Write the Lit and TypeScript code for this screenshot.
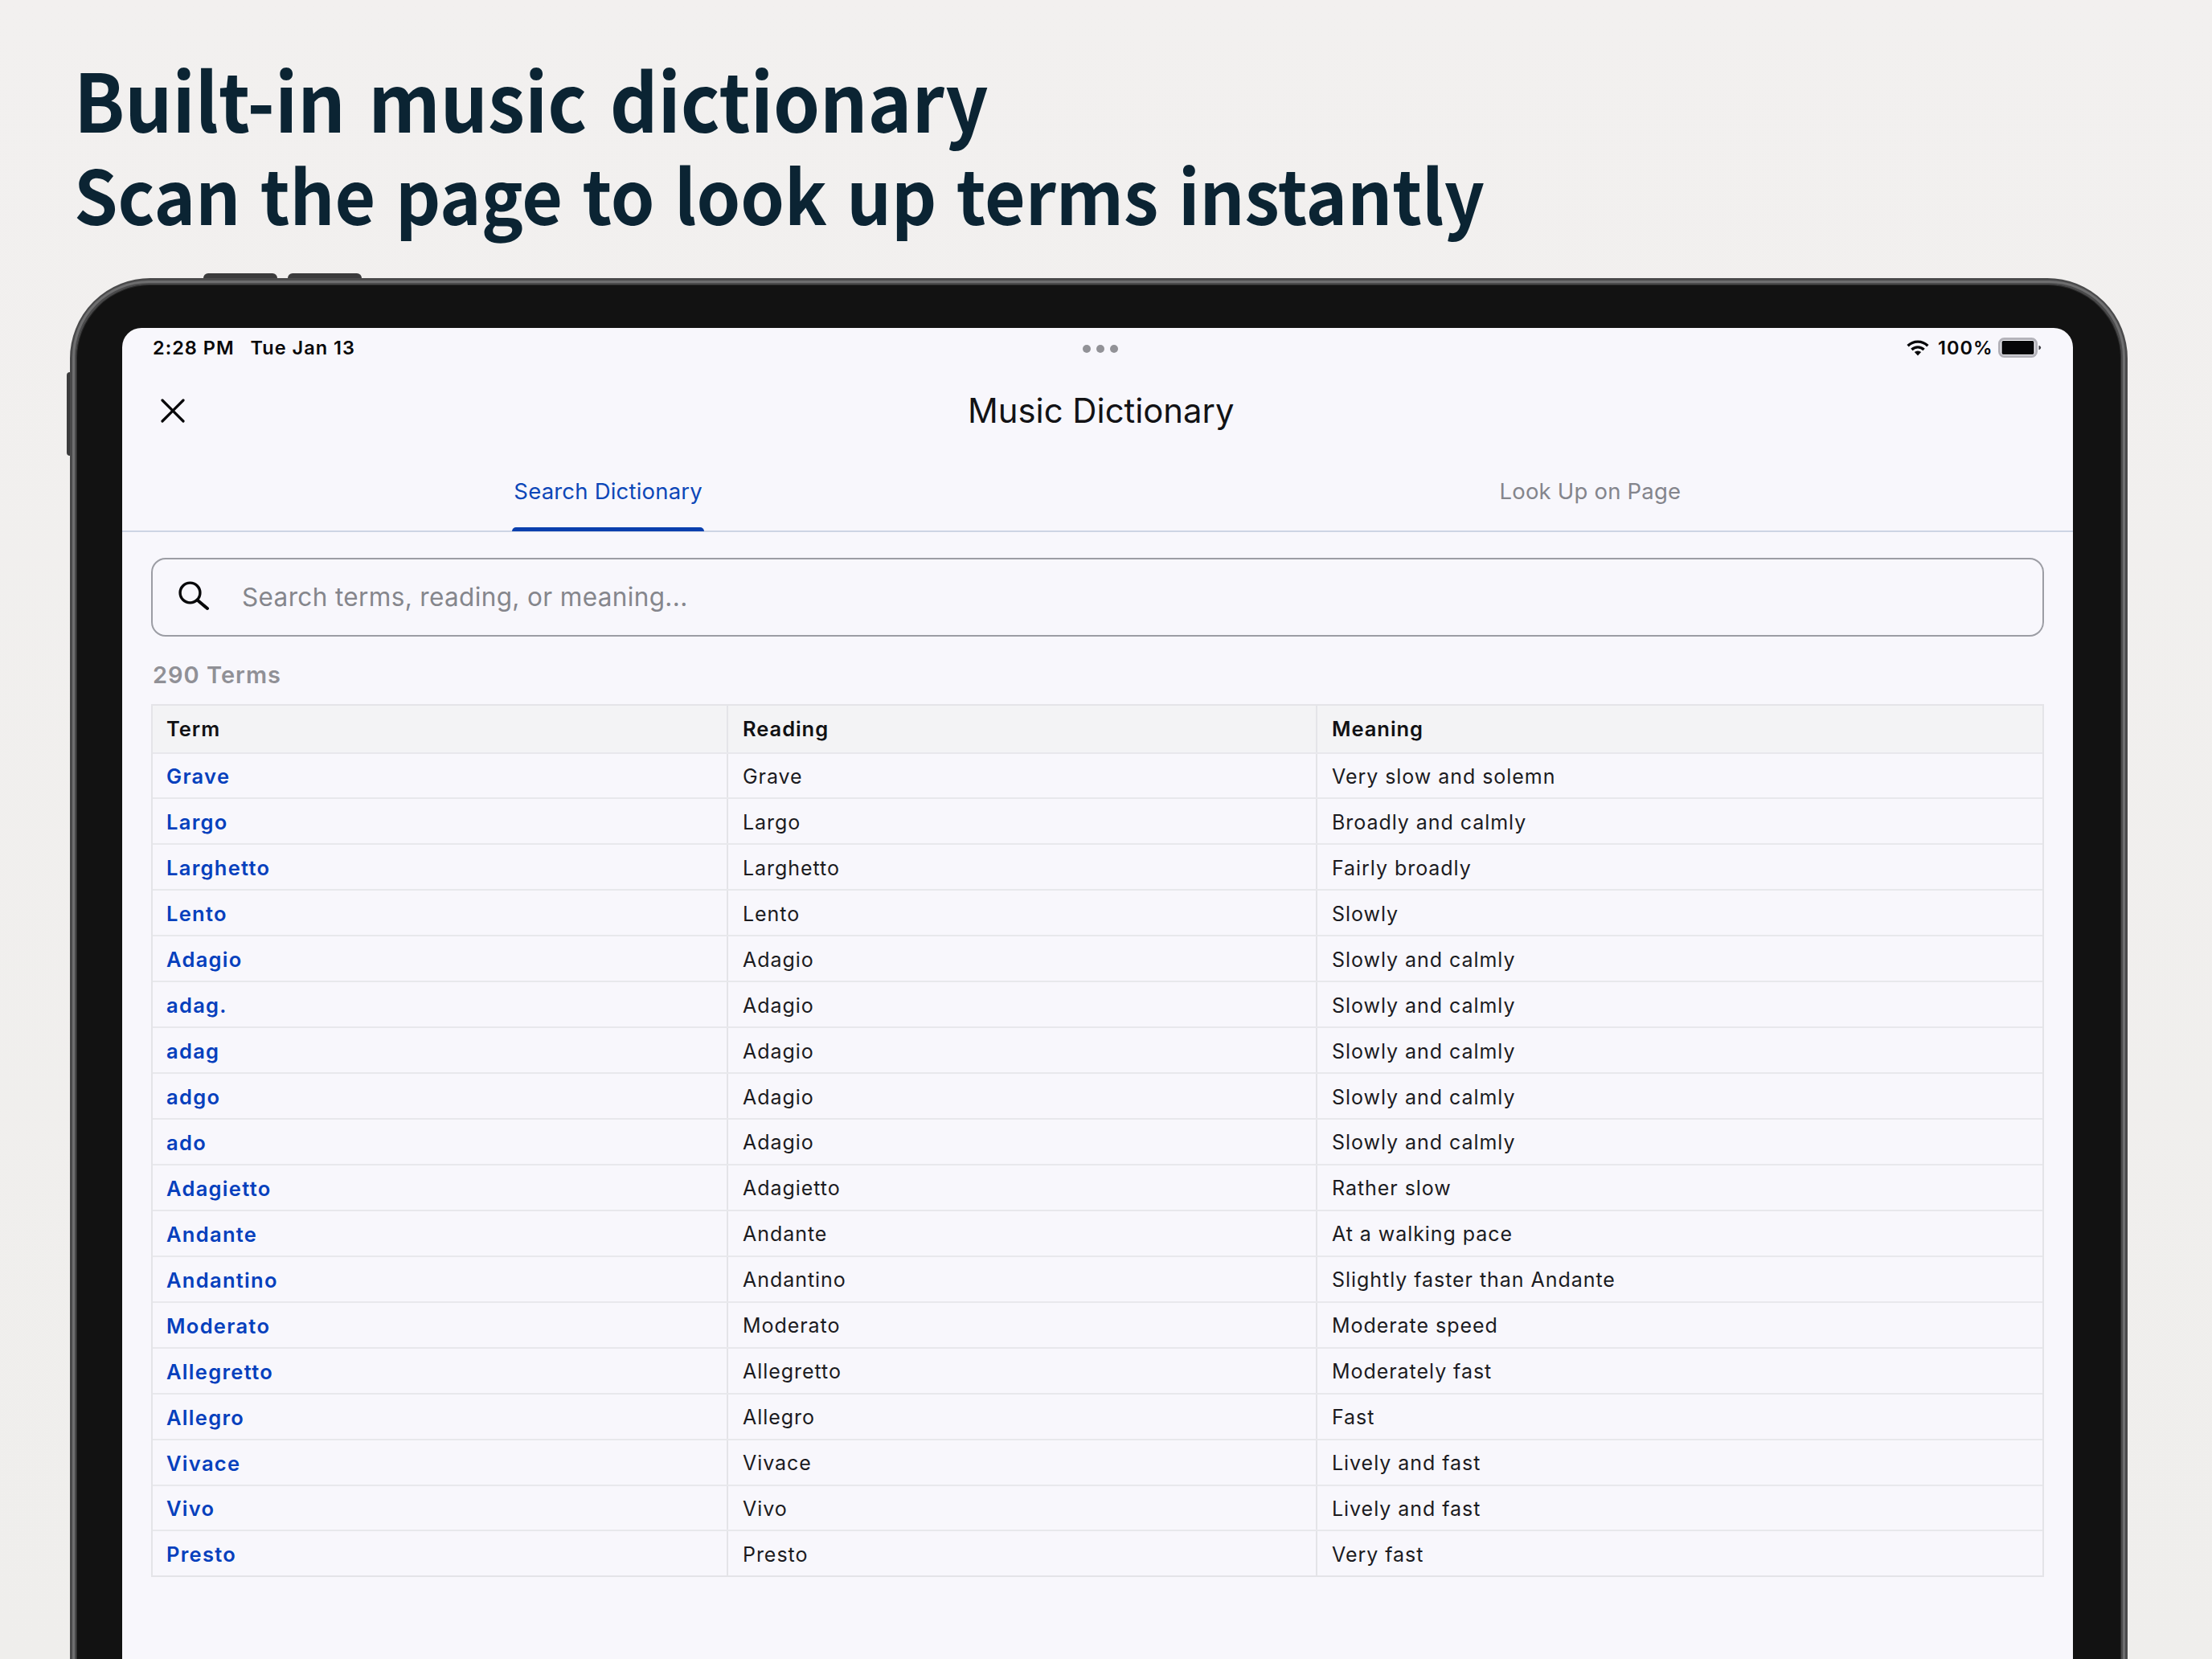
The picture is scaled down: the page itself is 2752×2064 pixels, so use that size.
import { LitElement, html, css } from "lit";
import { customElement, property, state } from "lit/decorators.js";
import { classMap } from "lit/directives/class-map.js";
import { repeat } from "lit/directives/repeat.js";

interface Entry {
  term: string;
  reading: string;
  meaning: string;
}

const ENTRIES: Entry[] = [
  { term: "Grave", reading: "Grave", meaning: "Very slow and solemn" },
  { term: "Largo", reading: "Largo", meaning: "Broadly and calmly" },
  { term: "Larghetto", reading: "Larghetto", meaning: "Fairly broadly" },
  { term: "Lento", reading: "Lento", meaning: "Slowly" },
  { term: "Adagio", reading: "Adagio", meaning: "Slowly and calmly" },
  { term: "adag.", reading: "Adagio", meaning: "Slowly and calmly" },
  { term: "adag", reading: "Adagio", meaning: "Slowly and calmly" },
  { term: "adgo", reading: "Adagio", meaning: "Slowly and calmly" },
  { term: "ado", reading: "Adagio", meaning: "Slowly and calmly" },
  { term: "Adagietto", reading: "Adagietto", meaning: "Rather slow" },
  { term: "Andante", reading: "Andante", meaning: "At a walking pace" },
  { term: "Andantino", reading: "Andantino", meaning: "Slightly faster than Andante" },
  { term: "Moderato", reading: "Moderato", meaning: "Moderate speed" },
  { term: "Allegretto", reading: "Allegretto", meaning: "Moderately fast" },
  { term: "Allegro", reading: "Allegro", meaning: "Fast" },
  { term: "Vivace", reading: "Vivace", meaning: "Lively and fast" },
  { term: "Vivo", reading: "Vivo", meaning: "Lively and fast" },
  { term: "Presto", reading: "Presto", meaning: "Very fast" },
];

@customElement("status-bar")
class StatusBar extends LitElement {
  static styles = css`
    :host {
      display: grid;
      grid-template-columns: 1fr auto 1fr;
      align-items: center;
      height: 50px;
      padding: 0 39px 0 38px;
      font-size: 23.5px;
      font-weight: 600;
      letter-spacing: 1px;
      color: #08080a;
    }
    .left {
      display: flex;
      gap: 20px;
      padding-bottom: 1px;
    }
    .dots {
      display: flex;
      gap: 7px;
      padding: 2px 0 0 8px;
    }
    .dot {
      width: 10px;
      height: 10px;
      border-radius: 50%;
      background: #929297;
    }
    .right {
      display: flex;
      justify-content: flex-end;
      align-items: center;
      padding-bottom: 1px;
    }
    .wifi {
      width: 28px;
      height: 21px;
      margin-right: 11px;
    }
    .battery {
      width: 54px;
      height: 25px;
      margin-left: 6px;
    }
  `;

  render() {
    return html`
      <div class="left"><span>2:28 PM</span><span>Tue Jan 13</span></div>
      <div class="dots">
        <span class="dot"></span><span class="dot"></span><span class="dot"></span>
      </div>
      <div class="right">
        <svg class="wifi" viewBox="0 0 28 21">
          <g fill="none" stroke="#08080a" stroke-width="3.4">
            <path d="M1.6 8.2a17.6 17.6 0 0 1 24.8 0" />
            <path d="M6.4 13a10.8 10.8 0 0 1 15.2 0" />
          </g>
          <path d="M14 20.5l-4.2-4.4a6 6 0 0 1 8.4 0z" fill="#08080a" />
        </svg>
        <span>100%</span>
        <svg class="battery" viewBox="0 0 54 25">
          <rect x="1.5" y="1.5" width="46" height="22" rx="6" fill="none" stroke="#b3b2b9" stroke-width="3" />
          <rect x="4.5" y="4" width="40" height="17" rx="2" fill="#060608" />
          <path d="M50.5 10c3.6.6 3.6 4.6 0 5.2z" fill="#3c3c42" />
        </svg>
      </div>
    `;
  }
}

@customElement("term-table")
class TermTable extends LitElement {
  @property({ attribute: false }) entries: Entry[] = [];

  static styles = css`
    :host {
      display: block;
      border: 2px solid #e4e4e8;
      font-size: 25px;
      letter-spacing: 0.95px;
      color: #1b1b1f;
    }
    .row {
      display: grid;
      grid-template-columns: 714px 733px 1fr;
      height: 56.94px;
      box-sizing: border-box;
      border-top: 2px solid #e8e8ec;
    }
    .head {
      height: 57.5px;
      border-top: none;
      background: #f3f3f5;
      font-size: 25.5px;
      font-weight: 600;
      color: #111114;
    }
    .cell {
      display: flex;
      align-items: center;
      padding: 2px 18px 0;
      border-left: 2px solid #e4e4e8;
    }
    .head .cell {
      padding-top: 0;
    }
    .cell:first-child {
      padding-left: 17px;
      border-left: none;
    }
    .term {
      font-size: 25.5px;
      font-weight: 600;
      letter-spacing: 1.3px;
      color: #0640bd;
    }
  `;

  render() {
    return html`
      <div class="row head">
        <div class="cell">Term</div>
        <div class="cell">Reading</div>
        <div class="cell">Meaning</div>
      </div>
      ${repeat(
        this.entries,
        (d) => d.term,
        (d) => html`
          <div class="row">
            <div class="cell term">${d.term}</div>
            <div class="cell">${d.reading}</div>
            <div class="cell">${d.meaning}</div>
          </div>
        `
      )}
    `;
  }
}

@customElement("app-root")
class AppRoot extends LitElement {
  @state() private _tab = 0;

  static styles = css`
    :host {
      display: flex;
      flex-direction: column;
      box-sizing: border-box;
      width: 2752px;
      height: 2064px;
      padding: 64px 105px 0 87px;
      overflow: hidden;
      background: linear-gradient(#f2f0ef, #efeeec);
      font-family: Inter, "Liberation Sans", sans-serif;
    }
    h1 {
      flex: none;
      height: 282px;
      margin: 0;
      padding-left: 5px;
      font: 700 100px/115px "Noto Sans CJK JP", "Open Sans", sans-serif;
      color: #0b2433;
      white-space: nowrap;
    }
    .line {
      display: block;
      word-spacing: 8px;
      transform: scaleX(0.929);
      transform-origin: 0 0;
    }
    .line + .line {
      padding-top: 3px;
      font-size: 93px;
      word-spacing: 5px;
      transform: scaleX(0.94);
    }
    .device {
      position: relative;
      flex: none;
      box-sizing: border-box;
      width: 2560px;
      height: 1900px;
      padding: 54px 60.5px 0 57px;
      border: 8px solid #4a4a4b;
      border-radius: 100px;
      background: #121212;
      box-shadow: inset 0 0 0 1px #2a2a2a;
    }
    .rim {
      position: absolute;
      inset: -5px;
      border: 3px solid #6e6e6f;
      border-radius: 95px;
    }
    .button {
      position: absolute;
      top: -14px;
      width: 92px;
      height: 6px;
      border-radius: 6px 6px 0 0;
      background: #3b3b3c;
    }
    .volume-up {
      left: 158px;
    }
    .volume-down {
      left: 263px;
    }
    .power {
      left: -12px;
      top: 109px;
      width: 4px;
      height: 104px;
      border-radius: 4px 0 0 4px;
    }
    .screen {
      height: 100%;
      border-radius: 24px 24px 0 0;
      background: #f8f7fc;
    }
    .title-bar {
      display: grid;
      grid-template-columns: 1fr auto 1fr;
      align-items: center;
      height: 106px;
      padding: 0 37px 0 46px;
    }
    .close {
      width: 34px;
      height: 34px;
    }
    .title {
      font-size: 41.8px;
      color: #121215;
    }
    .tabs {
      display: grid;
      grid-template-columns: 1fr 1fr;
      box-sizing: border-box;
      height: 98px;
      border-bottom: 2px solid #cdd4e4;
    }
    .tab {
      display: flex;
      justify-content: center;
      padding-left: 13px;
      font-size: 27.5px;
      letter-spacing: 0.2px;
      color: #84858c;
    }
    .tab:first-child {
      padding: 0 4px 0 0;
    }
    .label {
      display: flex;
      flex-direction: column;
      justify-content: space-between;
      height: 67px;
      padding: 30px 1px 0;
    }
    .active .label {
      color: #0d47b8;
    }
    .active .label::after {
      content: "";
      height: 5px;
      margin: 0 -2px;
      border-radius: 5px 5px 0 0;
      background: #0a3fae;
    }
    .body {
      padding: 32px 36px 0;
    }
    .search {
      display: flex;
      align-items: center;
      gap: 33px;
      box-sizing: border-box;
      height: 98px;
      padding: 0 26px 2px;
      border: 2.5px solid #9c9da4;
      border-radius: 18px;
      font-size: 31.5px;
      letter-spacing: 0.36px;
      color: #85868c;
    }
    .search-icon {
      width: 52px;
      height: 52px;
    }
    .count {
      height: 84px;
      padding-left: 2px;
      font-size: 29px;
      font-weight: 600;
      line-height: 96px;
      letter-spacing: 1px;
      color: #909096;
    }
  `;

  private _renderTab(label: string, index: number) {
    return html`
      <div
        class=${classMap({ tab: true, active: this._tab === index })}
        @click=${() => (this._tab = index)}
      >
        <span class="label">${label}</span>
      </div>
    `;
  }

  render() {
    return html`
      <h1>
        <span class="line">Built-in music dictionary</span>
        <span class="line">Scan the page to look up terms instantly</span>
      </h1>
      <div class="device">
        <div class="rim"></div>
        <div class="button volume-up"></div>
        <div class="button volume-down"></div>
        <div class="button power"></div>
        <div class="screen">
          <status-bar></status-bar>
          <div class="title-bar">
            <svg class="close" viewBox="0 0 34 34">
              <path d="M4 4l26 26M30 4l-26 26" stroke="#08080a" stroke-width="3.2" stroke-linecap="round" />
            </svg>
            <div class="title">Music Dictionary</div>
          </div>
          <div class="tabs">
            ${this._renderTab("Search Dictionary", 0)}
            ${this._renderTab("Look Up on Page", 1)}
          </div>
          <div class="body">
            <div class="search">
              <svg class="search-icon" viewBox="0 0 52 52" fill="none" stroke="#08080a">
                <circle cx="20.5" cy="21.5" r="12.4" stroke-width="3.4" />
                <path d="M29.5 30.5L42 41" stroke-width="4" stroke-linecap="round" />
              </svg>
              <span>Search terms, reading, or meaning...</span>
            </div>
            <div class="count">290 Terms</div>
            <term-table .entries=${ENTRIES}></term-table>
          </div>
        </div>
      </div>
    `;
  }
}
